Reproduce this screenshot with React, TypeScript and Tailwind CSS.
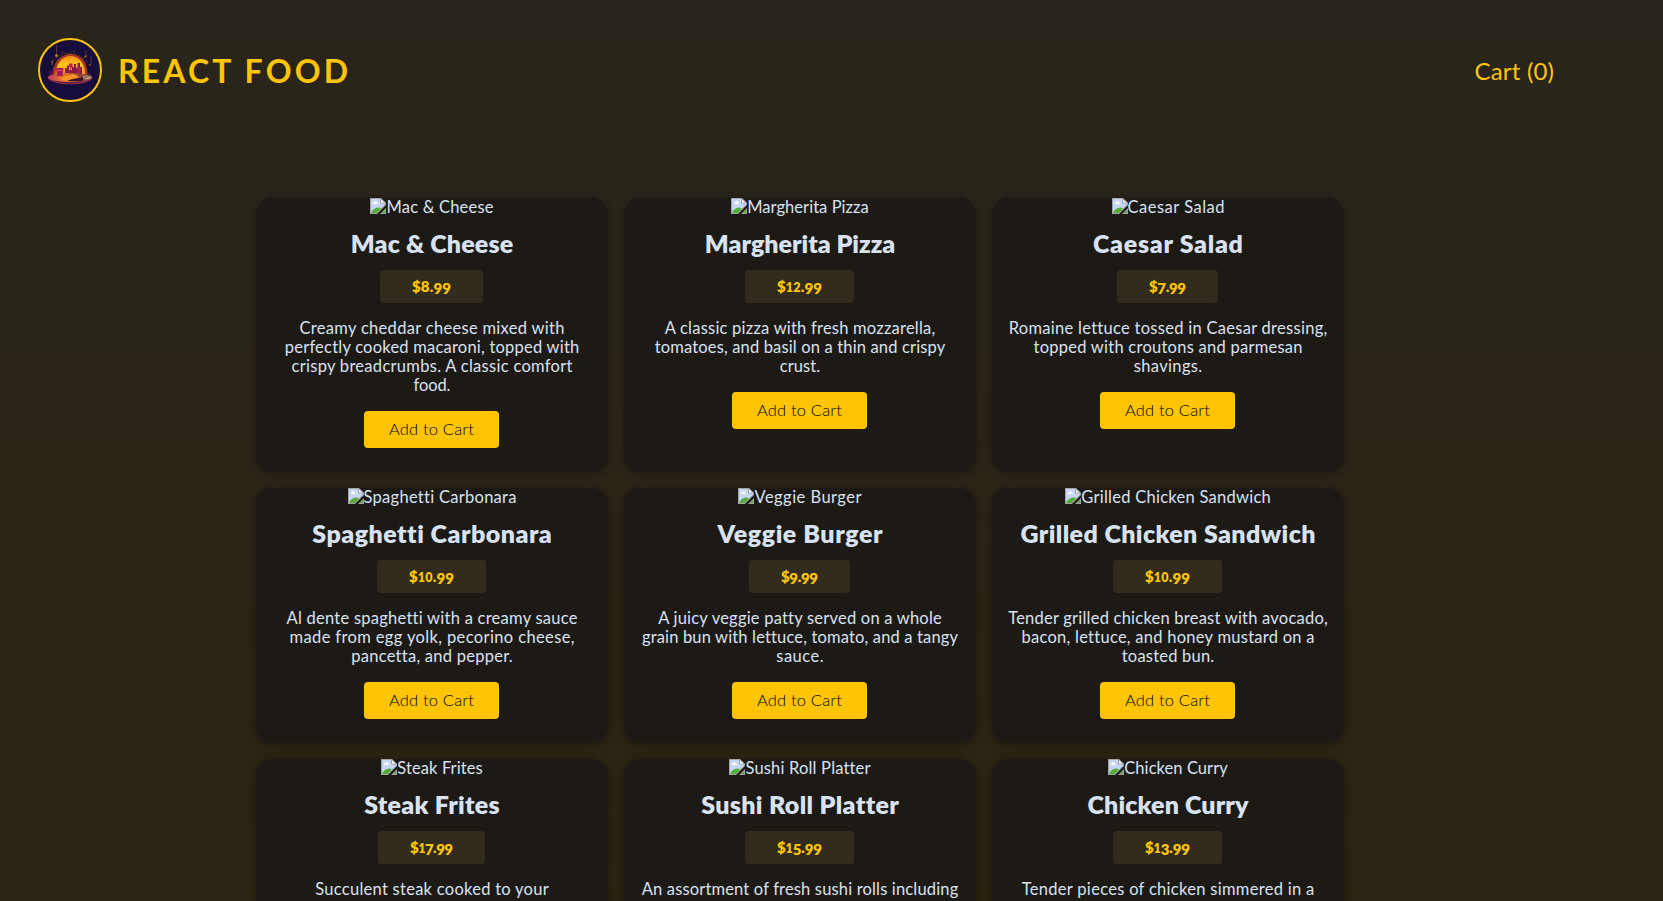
import { useLayoutEffect, useRef } from "react";
import type { ReactNode } from "react";

type Line = [text: string, width: number];

interface Meal {
  name: string;
  altWidth: number;
  titleWidth: number;
  price: string;
  priceWidth: number;
  lines: Line[];
}

const meals: Meal[] = [
  {
    name: "Mac & Cheese", altWidth: 107, titleWidth: 162.5, price: "$8.99", priceWidth: 39,
    lines: [["Creamy cheddar cheese mixed with", 265], ["perfectly cooked macaroni, topped with", 294.5], ["crispy breadcrumbs. A classic comfort", 281], ["food.", 37]],
  },
  {
    name: "Margherita Pizza", altWidth: 121.5, titleWidth: 190.5, price: "$12.99", priceWidth: 45,
    lines: [["A classic pizza with fresh mozzarella,", 270.5], ["tomatoes, and basil on a thin and crispy", 290.5], ["crust.", 40.5]],
  },
  {
    name: "Caesar Salad", altWidth: 97, titleWidth: 150, price: "$7.99", priceWidth: 37,
    lines: [["Romaine lettuce tossed in Caesar dressing,", 318], ["topped with croutons and parmesan", 269], ["shavings.", 68.5]],
  },
  {
    name: "Spaghetti Carbonara", altWidth: 152.5, titleWidth: 238.5, price: "$10.99", priceWidth: 45,
    lines: [["Al dente spaghetti with a creamy sauce", 290.5], ["made from egg yolk, pecorino cheese,", 285], ["pancetta, and pepper.", 161]],
  },
  {
    name: "Veggie Burger", altWidth: 107, titleWidth: 165, price: "$9.99", priceWidth: 37,
    lines: [["A juicy veggie patty served on a whole", 283], ["grain bun with lettuce, tomato, and a tangy", 315.5], ["sauce.", 47.5]],
  },
  {
    name: "Grilled Chicken Sandwich", altWidth: 189.5, titleWidth: 295, price: "$10.99", priceWidth: 45,
    lines: [["Tender grilled chicken breast with avocado,", 319.5], ["bacon, lettuce, and honey mustard on a", 292.5], ["toasted bun.", 92.5]],
  },
  {
    name: "Steak Frites", altWidth: 85.5, titleWidth: 135.5, price: "$17.99", priceWidth: 43,
    lines: [["Succulent steak cooked to your", 233.5]],
  },
  {
    name: "Sushi Roll Platter", altWidth: 124.5, titleWidth: 196.5, price: "$15.99", priceWidth: 45,
    lines: [["An assortment of fresh sushi rolls including", 316.5]],
  },
  {
    name: "Chicken Curry", altWidth: 103.5, titleWidth: 161, price: "$13.99", priceWidth: 45,
    lines: [["Tender pieces of chicken simmered in a", 292.5]],
  },
];

/** A single line whose tracking is adjusted so that it spans `width` pixels. */
function Fit({ text, width, children }: { text: string; width: number; children?: ReactNode }) {
  const ref = useRef<HTMLSpanElement>(null);
  useLayoutEffect(() => {
    const el = ref.current;
    if (!el) return;
    el.style.letterSpacing = "0px";
    el.style.marginRight = "0px";
    const gap = (width - el.getBoundingClientRect().width) / (text.length - 1);
    el.style.letterSpacing = `${gap}px`;
    el.style.marginRight = `${-gap}px`;
  }, [text, width]);
  return (
    <span ref={ref} className="inline-block whitespace-nowrap">
      {children ?? text}
    </span>
  );
}

/** Old-style figures: 0-2 stay at x-height, 3, 4, 5, 7 and 9 descend below the baseline. */
function Price({ value, width }: { value: string; width: number }) {
  return (
    <Fit text={value} width={width}>
      {value.split("").map((ch, i) => {
        if ("012".includes(ch)) return <span key={i} className="text-[12.500px] leading-none">{ch}</span>;
        if ("34579".includes(ch)) return <span key={i} className="align-[-2px] leading-none">{ch}</span>;
        return <span key={i} className="leading-none">{ch}</span>;
      })}
    </Fit>
  );
}

function BrokenImage() {
  return (
    <svg width="16" height="16" viewBox="0 0 16 16" className="shrink-0">
      <path d="M0 0H11L16 5V7L7 16H0Z" fill="#a3a3a3" />
      <path d="M1 1H10.5L15 5.5V6.5L6 15H1Z" fill="#c6d7f6" />
      <path d="M3 6a1.2 1.2 0 0 1 1-1.7 1.6 1.6 0 0 1 3 .1A1 1 0 0 1 7.6 6Z" fill="#fff" />
      <path d="M1 15C2.5 11.5 5 9.7 8 9.6C9.3 9.6 10 10 10.8 10.8L6.6 15Z" fill="#54ad37" />
      <path d="M10.5 0.5V5H15.5Z" fill="#fff" stroke="#a3a3a3" strokeWidth="1" />
      <path d="M16 10V16H10Z" fill="#a3a3a3" />
      <path d="M15 12V15H12Z" fill="#54ad37" />
    </svg>
  );
}

function Logo() {
  return (
    <div className="h-16 w-16 overflow-hidden rounded-full border-2 border-[#ffc404] bg-[#160d3c]">
      <svg viewBox="0 0 60 60" className="h-full w-full">
        <defs>
          <linearGradient id="sun" x1="0" y1="0" x2="0" y2="1">
            <stop offset="0" stopColor="#f58a1b" />
            <stop offset="0.4" stopColor="#fdc81c" />
            <stop offset="1" stopColor="#f0821c" />
          </linearGradient>
          <linearGradient id="plate" x1="0" y1="0" x2="1" y2="0">
            <stop offset="0" stopColor="#c0405d" />
            <stop offset="0.4" stopColor="#e87a24" />
            <stop offset="0.75" stopColor="#8f4030" />
            <stop offset="1" stopColor="#9d7a5c" />
          </linearGradient>
        </defs>
        <path d="M11 25A20 18 0 0 1 47 22" fill="none" stroke="#6d4319" strokeWidth="0.8" strokeDasharray="3 1.5" />
        <path d="M16.500 5V17M46 10V17M12.500 20V26M51 16V24" stroke="#6d4a1c" strokeWidth="0.7" />
        <circle cx="16.500" cy="15.500" r="1.600" fill="#a87a20" />
        <circle cx="45.500" cy="16.500" r="1.200" fill="#8a6420" />
        <circle cx="34" cy="11" r="0.500" fill="#c98b22" />
        <circle cx="23" cy="12" r="0.500" fill="#c98b22" />
        <circle cx="12" cy="22" r="0.900" fill="#8d5a1c" />
        <circle cx="50" cy="25" r="0.900" fill="#8d5a1c" />
        <path d="M9 39V31H12V27H16V33H20V39ZM42 39V28H44V31H48V33H51V39Z" fill="#4d0e4b" />
        <path d="M13 37C12 23 20 14 30.500 14S49 23 47 37Z" fill="#a8391f" />
        <path d="M15.500 37C15 24 22 16 30.500 16S46 24 45 37Z" fill="url(#sun)" />
        <path d="M25 37V28H27V25.500H29V30H32V27H34V24H36V28H37.500V23H40V27H42V37Z" fill="#8b1b46" />
        <ellipse cx="30" cy="38.500" rx="22" ry="5.500" fill="#5a1a4a" />
        <ellipse cx="30" cy="37.500" rx="22" ry="4.600" fill="url(#plate)" />
        <path d="M9 39C18 45 42 45 51 39C45 46 16 46 9 39Z" fill="#b83a50" />
        <path d="M19 38.500L33 34L40 37L28 41.500Z" fill="#f9942a" />
        <path d="M27 41C33 37.500 40 39 45 36.500L42 41Z" fill="#3a1225" />
        <path d="M16 28H23.500L22.500 36H17Z" fill="#a51c58" />
        <path d="M17 30.500H22.500" stroke="#e8446b" strokeWidth="1.200" />
        <path d="M29 23.500H32.500V26.500L31.200 28.500V35H30.400V28.500L29 26.500Z" fill="#c91e35" />
        <path d="M37 27.500H41L40.500 31L39.500 33V38H38.500V33L37.500 31Z" fill="#a8264e" />
        <ellipse cx="46.500" cy="37.500" rx="3.500" ry="1.600" fill="#c0a287" />
        <path d="M44 38L49 36.500" stroke="#5b4030" strokeWidth="0.800" />
      </svg>
    </div>
  );
}

function MealCard({ meal }: { meal: Meal }) {
  return (
    <li className="flex flex-col items-center overflow-hidden rounded-2xl bg-[#1d1a16] text-center shadow-[0_1px_8px_rgba(0,0,0,0.3)]">
      <div className="flex h-5 items-start text-[16.500px] leading-[19px]">
        <BrokenImage />
        <Fit text={meal.name} width={meal.altWidth} />
      </div>
      <h3 className="mt-3 h-7 text-[25px] leading-[27px] font-extrabold">
        <Fit text={meal.name} width={meal.titleWidth} />
      </h3>
      <p className="mt-3 mr-px h-[33px] rounded bg-[#312c1d] px-8 py-2 text-[15px] leading-[17px] font-extrabold text-[#ffc404]">
        <Price value={meal.price} width={meal.priceWidth} />
      </p>
      <p className="mt-4 flex flex-col items-center text-[16.500px] leading-[19px]">
        {meal.lines.map(([text, width]) => (
          <Fit key={text} text={text} width={width} />
        ))}
      </p>
      <button className="mt-4 mr-px mb-6 h-[37px] w-[135px] shrink-0 rounded bg-[#ffc404] text-[16.500px] leading-[35px] font-light text-black">
        <Fit text="Add to Cart" width={85} />
      </button>
    </li>
  );
}

export default function App() {
  return (
    <div className="h-screen overflow-hidden bg-[#29251c] font-['Lato',sans-serif] text-base text-[#d9e2f1]">
      <div className="h-[1650px] bg-linear-to-b from-[#29251c] to-[#2c2306]">
        <header className="flex items-center justify-between pt-[38px] pr-[109px] pl-[38px]">
          <div className="flex items-center gap-4">
            <Logo />
            <h1 className="pt-0.5 text-[32px] leading-10 font-bold text-[#ffc404]">
              <Fit text="REACT FOOD" width={230} />
            </h1>
          </div>
          <button className="pt-0.5 text-2xl leading-8 text-[#ffc404]">
            <Fit text="Cart (0)" width={79.5} />
          </button>
        </header>
        <ul className="mt-24 ml-64 grid w-[1088px] grid-cols-3 gap-4">
          {meals.map((meal) => (
            <MealCard key={meal.name} meal={meal} />
          ))}
        </ul>
      </div>
    </div>
  );
}
